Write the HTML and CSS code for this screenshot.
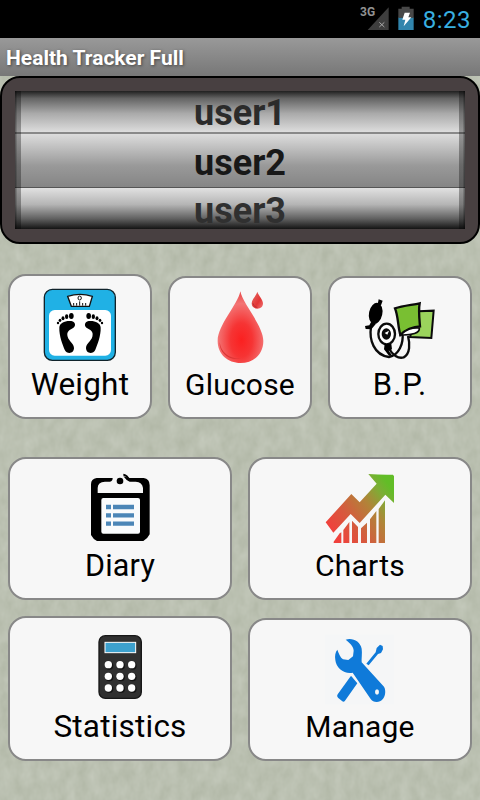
FILE: index.html
```html
<!DOCTYPE html>
<html lang="en">
<head>
<meta charset="utf-8">
<title>Health Tracker Full</title>
<link rel="stylesheet" href="styles.css">
</head>
<body>
<svg class="texture" width="480" height="800" aria-hidden="true">
  <filter id="stone" x="0" y="0" width="100%" height="100%" color-interpolation-filters="sRGB">
    <feTurbulence type="fractalNoise" baseFrequency="0.09 0.06" numOctaves="3" seed="4"/>
    <feColorMatrix values="0.09 0 0 0 0.685  0.085 0 0 0 0.71  0.1 0 0 0 0.642  0 0 0 0 1"/>
  </filter>
  <rect width="480" height="800" filter="url(#stone)"/>
</svg>
<div class="status">
  <svg width="60" height="38" viewBox="0 0 180 114">
    <path d="M80 90 143 22V90Z" fill="#3e3e3e"/>
    <path d="M115 67l15 14M130 67 115 81" stroke="#aaa" stroke-width="3"/>
    <path d="M172 52h46v38h-46Z" fill="#3185ad"/>
    <path d="M172 26h10v-6h24v6h12v27h-46Z" fill="#484848"/>
    <path d="M191 38h16l-5 14h9l-23 27 5-20h-9Z" fill="#fff"/>
  </svg>
  <span class="network">3G</span>
  <span class="clock">8:23</span>
</div>
<header class="title">Health Tracker Full</header>
<section class="picker">
  <div class="wheel">
    <div class="row first"><span>user1</span></div>
    <div class="row current"><span>user2</span></div>
    <div class="row last"><span>user3</span></div>
  </div>
</section>
<main>
  <div class="group three">
    <button class="tile tall weight">
      <svg viewBox="120 60 240 240">
        <rect x="133" y="73" width="213" height="213" rx="24" fill="#20b1e5" stroke="#10232b" stroke-width="4"/>
        <rect x="147" y="135" width="186" height="137" rx="17" fill="#fff"/>
        <path d="M203 94Q240 82 277 94L268 124H214Z" fill="#fff" stroke="#111" stroke-width="4"/>
        <path d="M221 122v-8M230 122v-8M239 122v-13M248 122v-8M257 122v-8" stroke="#111" stroke-width="3"/>
        <ellipse cx="239" cy="99" rx="5" ry="6" fill="#fff" stroke="#111" stroke-width="3"/>
        <g id="foot">
          <path d="M178 188C178 173 197 166 214 168C228 170 228 185 218 190C203 197 200 204 203 215C207 229 222 235 222 249C222 266 201 269 194 254C188 239 177 212 178 188Z"/>
          <ellipse cx="214" cy="153" rx="7" ry="9"/><ellipse cx="200" cy="155" rx="5" ry="7"/><ellipse cx="189" cy="160" rx="4.5" ry="6"/><ellipse cx="180" cy="166" rx="4" ry="5"/><ellipse cx="174" cy="174" rx="3.5" ry="4"/>
        </g>
        <use href="#foot" transform="matrix(-1 0 0 1 480 0)"/>
      </svg>
      <span>Weight</span>
    </button>
    <button class="tile glucose">
      <svg viewBox="120 60 240 240">
        <defs>
          <radialGradient id="blood" cx=".52" cy=".68" r=".68"><stop offset="0" stop-color="#fb2020"/><stop offset=".35" stop-color="#f63434"/><stop offset=".75" stop-color="#f37474"/><stop offset="1" stop-color="#e84848"/></radialGradient>
          <linearGradient id="droplet" x1="0" y1="0" x2="1" y2="1"><stop offset=".2" stop-color="#e45b57"/><stop offset=".6" stop-color="#e33535"/><stop offset="1" stop-color="#ef7777"/></linearGradient>
        </defs>
        <path d="M241 79C247 114 310 182 310 228C310 268 280 294 242 294C203 294 173 268 173 228C173 180 234 118 241 79Z" fill="url(#blood)"/>
        <path d="M179 230C182 262 207 281 242 281C206 288 177 263 179 230Z" fill="#dd3535"/>
        <path d="M292 80C295 91 309 103 309 115C309 125 302 131 292 131C282 131 275 125 275 115C275 103 289 92 292 80Z" fill="url(#droplet)"/>
        <path d="M279 115C281 123 286 127 292 127" fill="none" stroke="#b93232" stroke-width="3"/>
      </svg>
      <span>Glucose</span>
    </button>
    <button class="tile bp">
      <svg viewBox="120 60 240 240">
        <path d="M296 139 341 137 334 219 270 216Z" fill="#9bd45c" stroke="#0b0b0b" stroke-width="6"/>
        <path d="M153 186C147 223 161 270 207 276C236 272 252 235 247 202M206 249C217 270 235 282 251 277C271 267 270 235 264 213" fill="none" stroke="#0b0b0b" stroke-width="7"/>
        <path d="M225 130C248 122 276 120 299 115C295 137 298 161 300 184C280 184 255 196 241 210C233 182 235 154 225 130Z" fill="#79bf32" stroke="#0b0b0b" stroke-width="7"/>
        <path d="M242 210C255 195 277 186 298 189C300 204 276 211 242 210Z" fill="#fff" stroke="#0b0b0b" stroke-width="5"/>
        <ellipse cx="167" cy="145" rx="20" ry="32" transform="rotate(12 167 145)"/>
        <path d="M173 118 176 103 188 107 183 121ZM156 166 168 176 154 193 137 192 135 183 148 181Z"/>
        <ellipse cx="200" cy="207" rx="25" ry="31" fill="#fff" stroke="#0b0b0b" stroke-width="7"/>
        <ellipse cx="199" cy="207" rx="14" ry="17" fill="#0b0b0b"/>
        <path d="M194 204 207 197 202 209Z" fill="#fff"/>
        <path d="M194 237H214L216 253 206 257 217 272H207L192 253Z"/>
      </svg>
      <span>B.P.</span>
    </button>
  </div>
  <div class="group two upper">
    <button class="tile diary">
      <svg viewBox="90 60 240 240">
        <path d="M140 84H188Q188 94 180 95H165Q143 96 143 114V129H279V114Q277 96 257 95H239Q229 92 220 79L239 84H281Q299 86 299 106V253Q293 266 280 273H141Q129 267 123 255V103Q123 86 140 84Z"/>
        <circle cx="210" cy="93" r="10"/>
        <path d="M220 74Q233 77 238 91" fill="none" stroke="#000" stroke-width="5"/>
        <rect x="154" y="144" width="116" height="107" rx="6" fill="#f9fbfc"/>
        <path d="M168 171h15m6 0h63M168 196h15m6 0h63M168 221h15m6 0h63" stroke="#4b86b7" stroke-width="13"/>
      </svg>
      <span>Diary</span>
    </button>
    <button class="tile charts">
      <svg viewBox="90 60 240 240">
        <defs><linearGradient id="growth" gradientUnits="userSpaceOnUse" x1="125" y1="240" x2="302" y2="112"><stop offset="0" stop-color="#f0413c"/><stop offset=".3" stop-color="#d55b3e"/><stop offset=".62" stop-color="#b18438"/><stop offset=".85" stop-color="#7dad35"/><stop offset="1" stop-color="#62bd27"/></linearGradient></defs>
        <path fill="url(#growth)" d="M107 217 184 132 209 157 260 101 235 72Q274 75 309 74L312 79V159L286 134 209 219 182 192 130 248ZM131 275 149 250 154 247V279H131ZM160 240 178 216V279H160ZM186 212 204 231V279H186ZM213 235 231 218V279H213ZM240 208 259 183V279H240ZM266 177 285 151V279H266Z"/>
      </svg>
      <span>Charts</span>
    </button>
  </div>
  <div class="group two lower">
    <button class="tile tall statistics">
      <svg viewBox="120 60 240 240">
        <rect x="177" y="74" width="127" height="188" rx="19" fill="#303030" stroke="#171717" stroke-width="4"/>
        <rect x="195" y="94" width="92" height="31" fill="#3da1ce" stroke="#fff" stroke-width="3"/>
        <g fill="#151515"><circle cx="208" cy="164" r="12"/><circle cx="243" cy="164" r="12"/><circle cx="278" cy="164" r="12"/><circle cx="208" cy="199" r="12"/><circle cx="243" cy="199" r="12"/><circle cx="278" cy="199" r="12"/><circle cx="208" cy="234" r="12"/><circle cx="243" cy="234" r="12"/><circle cx="278" cy="234" r="12"/></g>
        <g fill="#fff"><circle cx="205" cy="161" r="11"/><circle cx="240" cy="161" r="11"/><circle cx="275" cy="161" r="11"/><circle cx="205" cy="196" r="11"/><circle cx="240" cy="196" r="11"/><circle cx="275" cy="196" r="11"/><circle cx="205" cy="231" r="11"/><circle cx="240" cy="231" r="11"/><circle cx="275" cy="231" r="11"/></g>
      </svg>
      <span>Statistics</span>
    </button>
    <button class="tile manage">
      <svg viewBox="90 60 240 240">
        <rect x="105" y="70" width="207" height="211" fill="#f5f6f7"/>
        <g fill="#0f7ad9">
          <path d="M167 86C187 79 211 91 215 113C217 127 214 143 215 154L282 227C290 241 285 264 270 271C258 276 247 271 242 264L188 185C163 190 138 171 136 147C134 135 136 122 142 116C146 127 151 140 159 145L175 147L189 136L191 119C191 105 177 94 167 86Z"/>
          <path d="M182 196Q185 195 188 200L202 217 165 269Q161 275 156 270L144 260Q139 256 143 250Z"/>
          <path d="M229 158 257 124 260 111 270 101 278 105 279 115 273 126 264 129 236 163Z"/>
        </g>
        <ellipse cx="261" cy="243" rx="6" ry="8" fill="#f5f7f8"/>
      </svg>
      <span>Manage</span>
    </button>
  </div>
</main>
</body>
</html>
```
FILE: styles.css
```css
* { box-sizing: border-box; }
body {
  margin: 0;
  width: 480px;
  height: 800px;
  overflow: hidden;
  background: #bbc1b2;
  font-family: Roboto, sans-serif;
}
.texture { position: absolute; inset: 0; z-index: -1; }
.status {
  position: relative;
  display: flex;
  justify-content: flex-end;
  height: 38px;
  padding-right: 9px;
  background: #000;
}
.status svg { overflow: visible; margin-right: 22px; }
.network {
  position: absolute;
  left: 360px;
  top: 5px;
  color: #929292;
  font: bold 12px/15px Roboto, sans-serif;
}
.clock { color: #38afe0; font-size: 24px; line-height: 40px; letter-spacing: .5px; }
.title {
  height: 38px;
  padding-left: 6px;
  background: linear-gradient(#999, #777);
  color: #fff;
  font-size: 21px;
  font-weight: 700;
  line-height: 40px;
  text-shadow: 1px 1px 3px #444;
}
.picker {
  height: 168px;
  padding: 13px;
  border: 2px solid #000;
  border-radius: 20px;
  background: #484041;
}
.wheel {
  position: relative;
  height: 138px;
  overflow: hidden;
  color: #181818;
  font-size: 36px;
  font-weight: 700;
  text-align: center;
}
.wheel::before, .wheel::after {
  content: "";
  position: absolute;
  top: 0;
  bottom: 0;
  left: 0;
  width: 6px;
  background: linear-gradient(90deg, rgba(0,0,0,.55) 1px, rgba(0,0,0,.32) 2px);
}
.wheel::after { left: auto; right: 0; transform: scaleX(-1); }
.row { display: flex; justify-content: center; line-height: 42px; }
.first { height: 43px; border-bottom: 2px solid #898989; background: linear-gradient(#202020, #646464 18%, #aaa 55%, #ddd); }
.current { height: 53px; background: linear-gradient(#dcdcdc, #bebebe 27%, #999 60%, #858585); }
.last { height: 42px; border-top: 1px solid #555; background: linear-gradient(#e1e1e1, #b5b5b5 40%, #606060 75%, #141414); }
.first span { margin-top: 1px; color: #2b2b2b; }
.current span { margin-top: 8px; }
.last span { color: #303030; margin-top: 3px; line-height: 40px; }
.group { display: grid; align-items: end; gap: 16px; padding: 0 8px; }
.three { grid-template-columns: repeat(3, 1fr); margin-top: 30px; }
.two { grid-template-columns: repeat(2, 1fr); }
.upper { margin-top: 38px; }
.lower { margin-top: 16px; }
.tile {
  display: flex;
  flex-direction: column;
  align-items: center;
  justify-content: flex-end;
  height: 143px;
  padding: 0 0 12px;
  border: 2px solid #888;
  border-radius: 18px;
  background: #f7f7f7;
  color: #000;
  font: 30px/36px Roboto, sans-serif;
}
.tall { height: 145px; }
.tile svg { width: 80px; height: 80px; flex: none; }
.tile span { letter-spacing: .2px; }
.three span { margin-top: 2px; }
.three .tile { padding-bottom: 14px; }
.two span { margin-top: -2px; }
.two .tile { padding-bottom: 14px; }
.tile.weight span { font-size: 31.5px; }
.tile.bp span { font-size: 31px; letter-spacing: 1px; }
.tile.diary span { font-size: 30.5px; }
.tile.statistics span { font-size: 31.5px; }
```
